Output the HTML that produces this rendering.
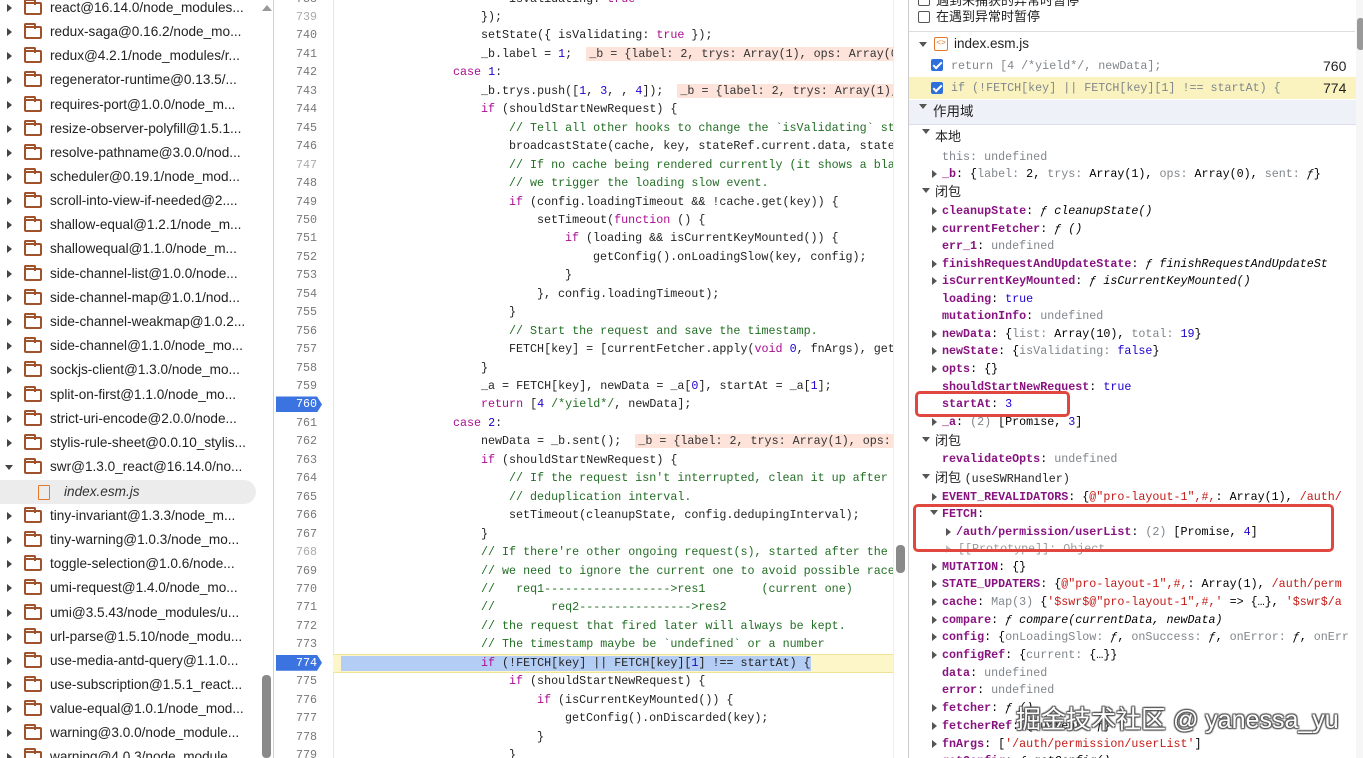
<!DOCTYPE html>
<html><head><meta charset="utf-8">
<style>
*{margin:0;padding:0;box-sizing:border-box}
body{width:1363px;height:758px;overflow:hidden;background:#fff;position:relative;font-family:"Liberation Sans","Noto Sans CJK SC",sans-serif;}
.tree{position:absolute;left:0;top:0;width:274px;height:758px;border-right:1px solid #d0d0d0;overflow:hidden}
.ti{position:absolute;left:0;height:24px;width:258px;font-size:13.6px;color:#222;line-height:24px;white-space:nowrap}
.ti .ar{position:absolute;left:7px;top:8px;width:0;height:0;border-left:5px solid #444;border-top:4px solid transparent;border-bottom:4px solid transparent}
.ti .ar.dn{left:5px;top:10px;border-top:5px solid #444;border-left:4px solid transparent;border-right:4px solid transparent;border-bottom:0}
.ti .fd{position:absolute;left:24px;top:6px;width:18px;height:13px;border:2px solid #a0522d;border-radius:2px}
.ti .fd:before{content:"";position:absolute;left:-2px;top:-5px;width:8px;height:4px;border:2px solid #a0522d;border-bottom:0;border-radius:2px 2px 0 0}
.ti .tx{position:absolute;left:50px}
.code{position:absolute;left:275px;top:0;width:633px;height:758px;overflow:hidden;font-family:"Liberation Mono",monospace;font-size:11.7px}
.r{position:absolute;left:0;width:633px;height:18.45px;line-height:18.45px;white-space:pre}
.n{position:absolute;left:0;width:42px;text-align:right;color:#777}
.n.lt{color:#aaa}
.c{position:absolute;color:#222}
.k{color:#aa0d91}.cm{color:#236e25}.nu{color:#1c00cf}
.iv{background:#fde3da;color:#333;padding:0 3px}
.bp{position:absolute;left:1px;top:1px;width:46px;height:16px;background:#3b74e0;clip-path:polygon(0 0,41px 0,46px 50%,41px 100%,0 100%)}
.bp + .n{color:#fff}
.right{position:absolute;left:908px;top:0;width:455px;height:758px;border-left:1px solid #ccc;overflow:hidden;font-family:"Liberation Mono","Noto Sans CJK SC",monospace;font-size:11.7px}
.rr{position:absolute;height:18px;line-height:18px;white-space:nowrap}
.kn{color:#881280;font-weight:bold}
.g{color:#80868b}.s{color:#c41a16}.b{color:#1c00cf}.it{font-style:italic}
.cn{font-family:"Liberation Sans","Noto Sans CJK SC",sans-serif;font-size:13px;color:#222}
.ra{position:absolute;width:0;height:0;border-left:5px solid #555;border-top:4px solid transparent;border-bottom:4px solid transparent;top:5px}
.rd{position:absolute;width:0;height:0;border-top:5px solid #555;border-left:4px solid transparent;border-right:4px solid transparent;top:7px}
.cb{position:absolute;width:12px;height:12px;border-radius:2px;background:#2f6fdc}
.cb:after{content:"";position:absolute;left:4px;top:1px;width:3px;height:7px;border:solid #fff;border-width:0 2px 2px 0;transform:rotate(45deg)}
.cbe{position:absolute;width:12px;height:12px;border:1.5px solid #555;border-radius:2px;background:#fff}
.box{position:absolute;border:3px solid #e0473f;border-radius:5px}
</style></head><body>

<div class="tree">
<div class="ti" style="top:-4px"><span class="ar"></span><span class="fd"></span><span class="tx">react@16.14.0/node_modules...</span></div>
<div class="ti" style="top:20px"><span class="ar"></span><span class="fd"></span><span class="tx">redux-saga@0.16.2/node_mo...</span></div>
<div class="ti" style="top:44px"><span class="ar"></span><span class="fd"></span><span class="tx">redux@4.2.1/node_modules/r...</span></div>
<div class="ti" style="top:68px"><span class="ar"></span><span class="fd"></span><span class="tx">regenerator-runtime@0.13.5/...</span></div>
<div class="ti" style="top:93px"><span class="ar"></span><span class="fd"></span><span class="tx">requires-port@1.0.0/node_m...</span></div>
<div class="ti" style="top:117px"><span class="ar"></span><span class="fd"></span><span class="tx">resize-observer-polyfill@1.5.1...</span></div>
<div class="ti" style="top:141px"><span class="ar"></span><span class="fd"></span><span class="tx">resolve-pathname@3.0.0/nod...</span></div>
<div class="ti" style="top:165px"><span class="ar"></span><span class="fd"></span><span class="tx">scheduler@0.19.1/node_mod...</span></div>
<div class="ti" style="top:189px"><span class="ar"></span><span class="fd"></span><span class="tx">scroll-into-view-if-needed@2....</span></div>
<div class="ti" style="top:213px"><span class="ar"></span><span class="fd"></span><span class="tx">shallow-equal@1.2.1/node_m...</span></div>
<div class="ti" style="top:237px"><span class="ar"></span><span class="fd"></span><span class="tx">shallowequal@1.1.0/node_m...</span></div>
<div class="ti" style="top:262px"><span class="ar"></span><span class="fd"></span><span class="tx">side-channel-list@1.0.0/node...</span></div>
<div class="ti" style="top:286px"><span class="ar"></span><span class="fd"></span><span class="tx">side-channel-map@1.0.1/nod...</span></div>
<div class="ti" style="top:310px"><span class="ar"></span><span class="fd"></span><span class="tx">side-channel-weakmap@1.0.2...</span></div>
<div class="ti" style="top:334px"><span class="ar"></span><span class="fd"></span><span class="tx">side-channel@1.1.0/node_mo...</span></div>
<div class="ti" style="top:358px"><span class="ar"></span><span class="fd"></span><span class="tx">sockjs-client@1.3.0/node_mo...</span></div>
<div class="ti" style="top:383px"><span class="ar"></span><span class="fd"></span><span class="tx">split-on-first@1.1.0/node_mo...</span></div>
<div class="ti" style="top:407px"><span class="ar"></span><span class="fd"></span><span class="tx">strict-uri-encode@2.0.0/node...</span></div>
<div class="ti" style="top:431px"><span class="ar"></span><span class="fd"></span><span class="tx">stylis-rule-sheet@0.0.10_stylis...</span></div>
<div class="ti" style="top:455px"><span class="ar dn"></span><span class="fd"></span><span class="tx">swr@1.3.0_react@16.14.0/no...</span></div>
<div class="ti" style="top:480px;background:#ececec;border-radius:0 12px 12px 0;width:256px"><span style="position:absolute;left:38px;top:5px;width:12px;height:15px;border:1.6px solid #e3782b;border-radius:1px"></span><span class="tx" style="left:64px;font-style:italic;color:#333">index.esm.js</span></div>
<div class="ti" style="top:504px"><span class="ar"></span><span class="fd"></span><span class="tx">tiny-invariant@1.3.3/node_m...</span></div>
<div class="ti" style="top:528px"><span class="ar"></span><span class="fd"></span><span class="tx">tiny-warning@1.0.3/node_mo...</span></div>
<div class="ti" style="top:552px"><span class="ar"></span><span class="fd"></span><span class="tx">toggle-selection@1.0.6/node...</span></div>
<div class="ti" style="top:576px"><span class="ar"></span><span class="fd"></span><span class="tx">umi-request@1.4.0/node_mo...</span></div>
<div class="ti" style="top:601px"><span class="ar"></span><span class="fd"></span><span class="tx">umi@3.5.43/node_modules/u...</span></div>
<div class="ti" style="top:625px"><span class="ar"></span><span class="fd"></span><span class="tx">url-parse@1.5.10/node_modu...</span></div>
<div class="ti" style="top:649px"><span class="ar"></span><span class="fd"></span><span class="tx">use-media-antd-query@1.1.0...</span></div>
<div class="ti" style="top:673px"><span class="ar"></span><span class="fd"></span><span class="tx">use-subscription@1.5.1_react...</span></div>
<div class="ti" style="top:697px"><span class="ar"></span><span class="fd"></span><span class="tx">value-equal@1.0.1/node_mod...</span></div>
<div class="ti" style="top:721px"><span class="ar"></span><span class="fd"></span><span class="tx">warning@3.0.0/node_module...</span></div>
<div class="ti" style="top:745px"><span class="ar"></span><span class="fd"></span><span class="tx">warning@4.0.3/node_module...</span></div>
<div style="position:absolute;left:262px;top:5px;width:0;height:0;border-bottom:6px solid #999;border-left:5px solid transparent;border-right:5px solid transparent"></div>
<div style="position:absolute;left:262px;top:675px;width:9px;height:83px;background:#8a8a8a;border-radius:4px"></div>
</div>

<div class="code">
<div style="position:absolute;left:58px;top:0;width:1px;height:758px;background:#e6e6e6"></div>
<div style="position:absolute;left:58px;top:654px;width:560px;height:19px;background:#fdf6c8;border-top:1px solid #efe49a;border-bottom:1px solid #efe49a"></div>
<div style="position:absolute;left:66px;top:656px;width:470px;height:15px;background:#b4cdf4"></div>
<div class="r" style="top:-10.45px"><span class="n">738</span><span class="c" style="left:234px">isValidating: <span class="k">true</span></span></div>
<div class="r" style="top:8px"><span class="n lt">739</span><span class="c" style="left:206px">});</span></div>
<div class="r" style="top:26.45px"><span class="n">740</span><span class="c" style="left:206px">setState({ isValidating: <span class="k">true</span> });</span></div>
<div class="r" style="top:44.9px"><span class="n">741</span><span class="c" style="left:206px">_b.label = <span class="nu">1</span>;  <span class="iv">_b = {label: 2, trys: Array(1), ops: Array(0)</span></span></div>
<div class="r" style="top:63.35px"><span class="n">742</span><span class="c" style="left:178px"><span class="k">case</span> <span class="nu">1</span>:</span></div>
<div class="r" style="top:81.8px"><span class="n">743</span><span class="c" style="left:206px">_b.trys.push([<span class="nu">1</span>, <span class="nu">3</span>, , <span class="nu">4</span>]);  <span class="iv">_b = {label: 2, trys: Array(1),</span></span></div>
<div class="r" style="top:100.25px"><span class="n">744</span><span class="c" style="left:206px"><span class="k">if</span> (shouldStartNewRequest) {</span></div>
<div class="r" style="top:118.7px"><span class="n">745</span><span class="c cm" style="left:234px">// Tell all other hooks to change the `isValidating` st</span></div>
<div class="r" style="top:137.15px"><span class="n">746</span><span class="c" style="left:234px">broadcastState(cache, key, stateRef.current.data, state</span></div>
<div class="r" style="top:155.6px"><span class="n lt">747</span><span class="c cm" style="left:234px">// If no cache being rendered currently (it shows a bla</span></div>
<div class="r" style="top:174.05px"><span class="n">748</span><span class="c cm" style="left:234px">// we trigger the loading slow event.</span></div>
<div class="r" style="top:192.5px"><span class="n">749</span><span class="c" style="left:234px"><span class="k">if</span> (config.loadingTimeout &amp;&amp; !cache.get(key)) {</span></div>
<div class="r" style="top:210.95px"><span class="n">750</span><span class="c" style="left:262px">setTimeout(<span class="k">function</span> () {</span></div>
<div class="r" style="top:229.4px"><span class="n">751</span><span class="c" style="left:290px"><span class="k">if</span> (loading &amp;&amp; isCurrentKeyMounted()) {</span></div>
<div class="r" style="top:247.85px"><span class="n">752</span><span class="c" style="left:318px">getConfig().onLoadingSlow(key, config);</span></div>
<div class="r" style="top:266.3px"><span class="n">753</span><span class="c" style="left:290px">}</span></div>
<div class="r" style="top:284.75px"><span class="n">754</span><span class="c" style="left:262px">}, config.loadingTimeout);</span></div>
<div class="r" style="top:303.2px"><span class="n">755</span><span class="c" style="left:234px">}</span></div>
<div class="r" style="top:321.65px"><span class="n">756</span><span class="c cm" style="left:234px">// Start the request and save the timestamp.</span></div>
<div class="r" style="top:340.1px"><span class="n">757</span><span class="c" style="left:234px">FETCH[key] = [currentFetcher.apply(<span class="k">void</span> <span class="nu">0</span>, fnArgs), get</span></div>
<div class="r" style="top:358.55px"><span class="n">758</span><span class="c" style="left:206px">}</span></div>
<div class="r" style="top:377px"><span class="n">759</span><span class="c" style="left:206px">_a = FETCH[key], newData = _a[<span class="nu">0</span>], startAt = _a[<span class="nu">1</span>];</span></div>
<div class="r" style="top:395.45px"><span class="bp"></span><span class="n">760</span><span class="c" style="left:206px"><span class="k">return</span> [<span class="nu">4</span> <span class="cm">/*yield*/</span>, newData];</span></div>
<div class="r" style="top:413.9px"><span class="n">761</span><span class="c" style="left:178px"><span class="k">case</span> <span class="nu">2</span>:</span></div>
<div class="r" style="top:432.35px"><span class="n">762</span><span class="c" style="left:206px">newData = _b.sent();  <span class="iv">_b = {label: 2, trys: Array(1), ops: </span></span></div>
<div class="r" style="top:450.8px"><span class="n">763</span><span class="c" style="left:206px"><span class="k">if</span> (shouldStartNewRequest) {</span></div>
<div class="r" style="top:469.25px"><span class="n">764</span><span class="c cm" style="left:234px">// If the request isn't interrupted, clean it up after</span></div>
<div class="r" style="top:487.7px"><span class="n">765</span><span class="c cm" style="left:234px">// deduplication interval.</span></div>
<div class="r" style="top:506.15px"><span class="n">766</span><span class="c" style="left:234px">setTimeout(cleanupState, config.dedupingInterval);</span></div>
<div class="r" style="top:524.6px"><span class="n">767</span><span class="c" style="left:206px">}</span></div>
<div class="r" style="top:543.05px"><span class="n lt">768</span><span class="c cm" style="left:206px">// If there're other ongoing request(s), started after the</span></div>
<div class="r" style="top:561.5px"><span class="n">769</span><span class="c cm" style="left:206px">// we need to ignore the current one to avoid possible race</span></div>
<div class="r" style="top:579.95px"><span class="n">770</span><span class="c cm" style="left:206px">//   req1------------------&gt;res1        (current one)</span></div>
<div class="r" style="top:598.4px"><span class="n">771</span><span class="c cm" style="left:206px">//        req2----------------&gt;res2</span></div>
<div class="r" style="top:616.85px"><span class="n">772</span><span class="c cm" style="left:206px">// the request that fired later will always be kept.</span></div>
<div class="r" style="top:635.3px"><span class="n">773</span><span class="c cm" style="left:206px">// The timestamp maybe be `undefined` or a number</span></div>
<div class="r" style="top:653.75px"><span class="bp"></span><span class="n">774</span><span class="c" style="left:206px"><span class="k">if</span> (!FETCH[key] || FETCH[key][<span class="nu">1</span>] !== startAt) {</span></div>
<div class="r" style="top:672.2px"><span class="n">775</span><span class="c" style="left:234px"><span class="k">if</span> (shouldStartNewRequest) {</span></div>
<div class="r" style="top:690.65px"><span class="n">776</span><span class="c" style="left:262px"><span class="k">if</span> (isCurrentKeyMounted()) {</span></div>
<div class="r" style="top:709.1px"><span class="n">777</span><span class="c" style="left:290px">getConfig().onDiscarded(key);</span></div>
<div class="r" style="top:727.55px"><span class="n">778</span><span class="c" style="left:262px">}</span></div>
<div class="r" style="top:746px"><span class="n">779</span><span class="c" style="left:234px">}</span></div>
<div style="position:absolute;left:618px;top:0;width:15px;height:758px;background:#fff;border-left:1px solid #eee"></div>
<div style="position:absolute;left:621px;top:545px;width:9px;height:28px;background:#8a8a8a;border-radius:4px"></div>
</div>

<div class="right">
<div class="rr cn" style="left:27px;top:-8px">遇到未捕获的异常时暂停</div>
<div class="cbe" style="left:9px;top:-6px"></div>
<div class="cbe" style="left:9px;top:11px"></div>
<div class="rr cn" style="left:27px;top:8px">在遇到异常时暂停</div>
<div style="position:absolute;left:0;top:31px;width:446px;height:1px;background:#ddd"></div>
<div class="rd" style="left:10px;top:42px"></div>
<div style="position:absolute;left:25px;top:37px;width:14px;height:14px;border:1.5px solid #e3782b;border-radius:2px;font-size:8px;color:#e3782b;line-height:11px;text-align:center">&lt;&gt;</div>
<div class="rr cn" style="left:45px;top:35px;font-size:13.5px">index.esm.js</div>
<div class="cb" style="left:22px;top:59px"></div>
<div class="rr g" style="left:42px;top:57px">return [4 /*yield*/, newData];</div>
<div class="rr cn" style="left:414px;top:57px;font-size:14px">760</div>
<div style="position:absolute;left:0;top:77px;width:447px;height:22px;background:#fbf3bf"></div>
<div class="cb" style="left:22px;top:82px"></div>
<div class="rr g" style="left:42px;top:79px">if (!FETCH[key] || FETCH[key][1] !== startAt) {</div>
<div class="rr cn" style="left:414px;top:79px;font-size:14px">774</div>
<div style="position:absolute;left:0;top:100px;width:447px;height:25px;background:#eef2f8;border-bottom:1px solid #dde"></div>
<div class="rd" style="left:10px;top:104px"></div>
<div class="rr cn" style="left:24px;top:103px;font-size:13.5px">作用域</div>

<div class="rd" style="left:13px;top:129px"></div><div class="rr cn" style="left:26px;top:128px">本地</div>
<div class="rr" style="left:33px;top:148px"><span class="g">this: undefined</span></div>
<div class="ra" style="left:23px;top:170px"></div><div class="rr" style="left:33px;top:165px"><span class="kn">_b</span>: {<span class="g">label:</span> 2, <span class="g">trys:</span> Array(1), <span class="g">ops:</span> Array(0), <span class="g">sent:</span> <span class="it">ƒ</span>}</div>
<div class="rd" style="left:13px;top:188px"></div><div class="rr cn" style="left:26px;top:183px">闭包</div>
<div class="ra" style="left:23px;top:207px"></div><div class="rr" style="left:33px;top:202px"><span class="kn">cleanupState</span>: <span class="it">ƒ cleanupState()</span></div>
<div class="ra" style="left:23px;top:225px"></div><div class="rr" style="left:33px;top:220px"><span class="kn">currentFetcher</span>: <span class="it">ƒ ()</span></div>
<div class="rr" style="left:33px;top:237px"><span class="kn">err_1</span>: <span class="g">undefined</span></div>
<div class="ra" style="left:23px;top:260px"></div><div class="rr" style="left:33px;top:255px"><span class="kn">finishRequestAndUpdateState</span>: <span class="it">ƒ finishRequestAndUpdateSt</span></div>
<div class="ra" style="left:23px;top:277px"></div><div class="rr" style="left:33px;top:272px"><span class="kn">isCurrentKeyMounted</span>: <span class="it">ƒ isCurrentKeyMounted()</span></div>
<div class="rr" style="left:33px;top:290px"><span class="kn">loading</span>: <span class="b">true</span></div>
<div class="rr" style="left:33px;top:307px"><span class="kn">mutationInfo</span>: <span class="g">undefined</span></div>
<div class="ra" style="left:23px;top:330px"></div><div class="rr" style="left:33px;top:325px"><span class="kn">newData</span>: {<span class="g">list:</span> Array(10), <span class="g">total:</span> <span class="b">19</span>}</div>
<div class="ra" style="left:23px;top:347px"></div><div class="rr" style="left:33px;top:342px"><span class="kn">newState</span>: {<span class="g">isValidating:</span> <span class="b">false</span>}</div>
<div class="ra" style="left:23px;top:365px"></div><div class="rr" style="left:33px;top:360px"><span class="kn">opts</span>: {}</div>
<div class="rr" style="left:33px;top:378px"><span class="kn">shouldStartNewRequest</span>: <span class="b">true</span></div>
<div class="rr" style="left:33px;top:395px"><span class="kn">startAt</span>: <span class="b">3</span></div>
<div class="ra" style="left:23px;top:418px"></div><div class="rr" style="left:33px;top:413px"><span class="kn">_a</span>: <span class="g">(2)</span>  [Promise, <span class="b">3</span>]</div>
<div class="rd" style="left:13px;top:437px"></div><div class="rr cn" style="left:26px;top:432px">闭包</div>
<div class="rr" style="left:33px;top:450px"><span class="kn">revalidateOpts</span>: <span class="g">undefined</span></div>
<div class="rd" style="left:13px;top:474px"></div><div class="rr cn" style="left:26px;top:469px">闭包 <span style="font-family:'Liberation Mono',monospace;font-size:11.7px">(useSWRHandler)</span></div>
<div class="ra" style="left:23px;top:493px"></div><div class="rr" style="left:33px;top:488px"><span class="kn">EVENT_REVALIDATORS</span>: {<span class="s">@"pro-layout-1",#,</span>: Array(1), <span class="s">/auth/</span></div>
<div class="rd" style="left:21px;top:510px"></div><div class="rr" style="left:33px;top:505px"><span class="kn">FETCH</span>:</div>
<div class="ra" style="left:37px;top:528px"></div><div class="rr" style="left:47px;top:523px"><span class="kn">/auth/permission/userList</span>: <span class="g">(2)</span>  [Promise, <span class="b">4</span>]</div>
<div class="ra" style="left:37px;top:545px;border-left-color:#bbb"></div><div class="rr" style="left:49px;top:540px;color:#999">[[Prototype]]: Object</div>
<div class="ra" style="left:23px;top:563px"></div><div class="rr" style="left:33px;top:558px"><span class="kn">MUTATION</span>: {}</div>
<div class="ra" style="left:23px;top:580px"></div><div class="rr" style="left:33px;top:575px"><span class="kn">STATE_UPDATERS</span>: {<span class="s">@"pro-layout-1",#,</span>: Array(1), <span class="s">/auth/perm</span></div>
<div class="ra" style="left:23px;top:598px"></div><div class="rr" style="left:33px;top:593px"><span class="kn">cache</span>: <span class="g">Map(3)</span>  {<span class="s">'$swr$@"pro-layout-1",#,'</span> =&gt; {…}, <span class="s">'$swr$/a</span></div>
<div class="ra" style="left:23px;top:616px"></div><div class="rr" style="left:33px;top:611px"><span class="kn">compare</span>: <span class="it">ƒ compare(currentData, newData)</span></div>
<div class="ra" style="left:23px;top:633px"></div><div class="rr" style="left:33px;top:628px"><span class="kn">config</span>: {<span class="g">onLoadingSlow:</span> <span class="it">ƒ</span>, <span class="g">onSuccess:</span> <span class="it">ƒ</span>, <span class="g">onError:</span> <span class="it">ƒ</span>, <span class="g">onErr</span></div>
<div class="ra" style="left:23px;top:651px"></div><div class="rr" style="left:33px;top:646px"><span class="kn">configRef</span>: {<span class="g">current:</span> {…}}</div>
<div class="rr" style="left:33px;top:664px"><span class="kn">data</span>: <span class="g">undefined</span></div>
<div class="rr" style="left:33px;top:681px"><span class="kn">error</span>: <span class="g">undefined</span></div>
<div class="ra" style="left:23px;top:704px"></div><div class="rr" style="left:33px;top:699px"><span class="kn">fetcher</span>: <span class="it">ƒ ()</span></div>
<div class="ra" style="left:23px;top:722px"></div><div class="rr" style="left:33px;top:717px"><span class="kn">fetcherRef</span>: {current: ƒ}</div>
<div class="ra" style="left:23px;top:740px"></div><div class="rr" style="left:33px;top:735px"><span class="kn">fnArgs</span>: [<span class="s">'/auth/permission/userList'</span>]</div>
<div class="rr" style="left:33px;top:752px"><span class="kn">getConfig</span>: <span class="it">ƒ getConfig()</span></div>
<div class="box" style="left:6px;top:391px;width:155px;height:26px"></div>
<div class="box" style="left:4px;top:504px;width:421px;height:48px"></div>
<div style="position:absolute;left:447px;top:0;width:8px;height:758px;background:#f6f6f6"></div>
<div style="position:absolute;left:448px;top:18px;width:7px;height:32px;background:#999;border-radius:3px"></div>
<div style="position:absolute;left:107px;top:700px;font-family:'Liberation Sans','Noto Sans CJK SC',sans-serif;font-size:25px;color:#fff;white-space:nowrap;text-shadow:0 0 2px #555,1px 1px 1px #555,-1px -1px 1px #555,1px -1px 1px #555,-1px 1px 1px #555">掘金技术社区 @ yanessa_yu</div>
</div>
</body></html>
